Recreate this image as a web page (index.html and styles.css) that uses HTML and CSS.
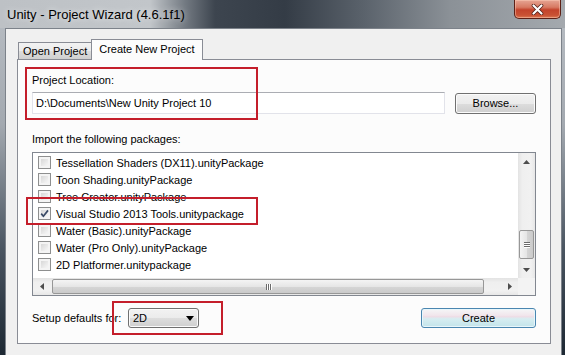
FILE: index.html
```html
<!DOCTYPE html>
<html lang="en">
<head>
	<meta charset="UTF-8">
	<title>Unity - Project Wizard</title>
	<link rel="stylesheet" href="styles.css">
</head>
<body>
	<div class="window">
		<div class="titlebar">
			<span class="title">Unity - Project Wizard (4.6.1f1)</span>
			<span class="close">
				<svg width="13" height="11" viewBox="0 0 13 11"><path d="M2.5 1.5 L10.5 9.5 M10.5 1.5 L2.5 9.5" stroke="#4a1a12" stroke-width="3.6" stroke-linecap="round"/><path d="M2.5 1.5 L10.5 9.5 M10.5 1.5 L2.5 9.5" stroke="#fff" stroke-width="2.2" stroke-linecap="round"/></svg>
			</span>
		</div>
		<div class="client">
			<div class="tabs">
				<span class="tab">Open Project</span>
				<span class="tab active">Create New Project</span>
			</div>
			<div class="panel">
				<div class="label">Project Location:</div>
				<div class="location-row">
					<div class="input">D:\Documents\New Unity Project 10</div>
					<span class="btn browse">Browse...</span>
				</div>
				<div class="label packages-label">Import the following packages:</div>
				<div class="listbox">
					<div class="items">
						<div class="item"><span class="check"></span>Tessellation Shaders (DX11).unityPackage</div>
						<div class="item"><span class="check"></span>Toon Shading.unityPackage</div>
						<div class="item"><span class="check"></span>Tree Creator.unityPackage</div>
						<div class="item"><span class="check checked"><svg width="11" height="11" viewBox="0 0 11 11"><path d="M2.2 5.6 L4.4 8.2 L9 2.4" fill="none" stroke="#3a4a66" stroke-width="1.7"/></svg></span>Visual Studio 2013 Tools.unitypackage</div>
						<div class="item"><span class="check"></span>Water (Basic).unityPackage</div>
						<div class="item"><span class="check"></span>Water (Pro Only).unityPackage</div>
						<div class="item"><span class="check"></span>2D Platformer.unitypackage</div>
					</div>
					<div class="vscroll">
						<span class="sb-btn"><svg width="7" height="4" viewBox="0 0 7 4"><polygon points="3.5,0 7,4 0,4" fill="#4d4d4d"/></svg></span>
						<span class="vthumb"><i></i><i></i><i></i></span>
						<span class="sb-track"></span>
						<span class="sb-btn"><svg width="7" height="4" viewBox="0 0 7 4"><polygon points="0,0 7,0 3.5,4" fill="#4d4d4d"/></svg></span>
					</div>
					<div class="hscroll">
						<span class="sb-btn"><svg width="4" height="7" viewBox="0 0 4 7"><polygon points="4,0 4,7 0,3.5" fill="#4d4d4d"/></svg></span>
						<span class="hthumb"><i></i><i></i><i></i></span>
						<span class="sb-track"></span>
						<span class="sb-btn"><svg width="4" height="7" viewBox="0 0 4 7"><polygon points="0,0 4,3.5 0,7" fill="#4d4d4d"/></svg></span>
					</div>
					<div class="corner"></div>
				</div>
				<div class="footer">
					<span class="setup-label">Setup defaults for:</span>
					<span class="select">2D<svg width="8" height="5" viewBox="0 0 8 5"><polygon points="0,0 8,0 4,5" fill="#000"/></svg></span>
					<span class="btn create">Create</span>
				</div>
			</div>
		</div>
	</div>
	<div class="mark mark-location"></div>
	<div class="mark mark-package"></div>
	<div class="mark mark-setup"></div>
</body>
</html>
```

FILE: styles.css
```css
*{margin:0;padding:0;box-sizing:border-box}
body{
	width: 565px;
	height: 355px;
	overflow:hidden;
	position:relative;
	font-family: "Liberation Sans", Arial, sans-serif;
	font-size: 11px;
	color:#000;
	background:linear-gradient(180deg, #b9bec4 0, #a3a9b0 35%, #4a5561 70%, #1d2833 100%);
}
.window{
	height: 355px;
	display:flex;
	flex-direction:column;
}
.titlebar{
	height: 28px;
	display:flex;
	align-items:center;
	background:linear-gradient(90deg, #bdc1c5 0, #c2c6ca 150px, #737a82 185px, #3d454f 215px, #343c46 285px, #5b636c 365px, #8b9197 450px, #a4a9ae 565px);
}
.title{
	padding-left: 7px;
	font-size: 13px;
	color:#000;
	text-shadow:0 0 6px rgba(255,255,255,.8);
}
.close{
	margin-left:auto;
	margin-right:4px;
	align-self:flex-start;
	width: 47px;
	height: 19px;
	display:flex;
	align-items:center;
	justify-content:center;
	border:1px solid #5c2016;
	border-top:none;
	border-radius:0 0 5px 5px;
	background:linear-gradient(180deg, #e6a593 0, #d77a63 40%, #c3432b 55%, #c95234 85%, #dc7a55 100%);
	box-shadow:inset 0 0 0 1px rgba(255,210,190,.45);
}
.client{
	flex:1;
	margin:0 3px 0 5px;
	border:1px solid #7c828a;
	border-bottom:none;
	background:#f0f0f0;
	padding:10px 10px 0 11px;
}
.tabs{
	height: 20px;
	display:flex;
	align-items:flex-end;
	padding-left:1px;
}
.tab{
	height: 17px;
	padding:0 4px;
	line-height: 16px;
	border:1px solid #898c95;
	border-bottom:none;
	background:linear-gradient(180deg, #f2f2f2 0, #ebebeb 50%, #dddddd 51%, #cfcfcf 100%);
}
.tab.active{
	height: 21px;
	margin-bottom:-1px;
	margin-left:-1px;
	padding:0 7px;
	line-height: 18px;
	background:#fcfcfc;
	position:relative;
	z-index:1;
}
.panel{
	border:1px solid #898c95;
	background:#fcfcfc;
	padding:13px 14px 13px 14px;
}
.label{
	line-height: 14px;
}
.location-row{
	display:flex;
	align-items:center;
	gap:10px;
	margin-top:5px;
}
.input{
	flex:1;
	height: 22px;
	line-height: 20px;
	padding-left:3px;
	background:#fff;
	border:1px solid #e2e3ea;
	border-top-color:#abadb3;
}
.btn{
	display:flex;
	align-items:center;
	justify-content:center;
	border:1px solid #707070;
	border-radius:3px;
	background:linear-gradient(180deg, #f2f2f2 0, #ebebeb 50%, #dddddd 51%, #cfcfcf 100%);
	box-shadow:inset 0 0 0 1px #fbfbfb;
}
.browse{
	width: 81px;
	height: 21px;
}
.packages-label{
	margin-top:18px;
}
.listbox{
	margin-top:6px;
	height: 144px;
	border:1px solid #828790;
	background:#fff;
	display:grid;
	grid-template-columns:1fr 17px;
	grid-template-rows:1fr 17px;
}
.items{
	padding:1px 0 0 5px;
	overflow:hidden;
}
.item{
	height: 17px;
	display:flex;
	align-items:center;
	gap:5px;
	white-space:nowrap;
}
.check{
	width: 13px;
	height: 13px;
	flex:none;
	display:flex;
	align-items:center;
	justify-content:center;
	border:1px solid #8e8f8f;
	background:linear-gradient(135deg, #cfcfcf 0, #f1f1f1 70%, #fbfbfb 100%);
	box-shadow:inset 0 0 0 2px #f4f4f4;
}
.vscroll{
	display:flex;
	flex-direction:column;
	background:linear-gradient(90deg, #e3e3e3 0, #efefef 25%, #f1f1f1 75%, #e7e7e7 100%);
}
.hscroll{
	display:flex;
	background:linear-gradient(180deg, #e3e3e3 0, #efefef 25%, #f1f1f1 75%, #e7e7e7 100%);
}
.sb-btn{
	width: 17px;
	height: 17px;
	flex:none;
	display:flex;
	align-items:center;
	justify-content:center;
}
.sb-track{
	flex:1;
}
.vthumb{
	margin:60px 1px 0;
	height: 29px;
	flex:none;
	display:flex;
	flex-direction:column;
	align-items:center;
	justify-content:center;
	gap:1px;
	border:1px solid #979797;
	border-radius:2px;
	background:linear-gradient(90deg, #f4f4f4 0, #e6e6e6 50%, #d6d6d6 51%, #cacaca 100%);
}
.vthumb i{
	width: 6px;
	height: 1px;
	background:#6b6b6b;
	box-shadow:0 1px 0 #fff;
}
.hthumb{
	margin:1px 0 1px 2px;
	width: 432px;
	flex:none;
	display:flex;
	align-items:center;
	justify-content:center;
	gap:1px;
	border:1px solid #979797;
	border-radius:2px;
	background:linear-gradient(180deg, #f4f4f4 0, #e6e6e6 50%, #d6d6d6 51%, #cacaca 100%);
}
.hthumb i{
	width: 1px;
	height: 6px;
	background:#6b6b6b;
	box-shadow:1px 0 0 #fff;
}
.corner{
	background:#f3f3f3;
}
.footer{
	margin-top:10px;
	height: 24px;
	display:flex;
	align-items:center;
}
.setup-label{
	width: 96px;
}
.select{
	width: 71px;
	height: 20px;
	display:flex;
	align-items:center;
	justify-content:space-between;
	padding:0 4px 0 4px;
	border:1px solid #707070;
	border-radius:3px;
	background:linear-gradient(180deg, #f2f2f2 0, #ebebeb 50%, #dddddd 51%, #cfcfcf 100%);
	box-shadow:inset 0 0 0 1px #fbfbfb;
}
.create{
	margin-left:auto;
	width: 115px;
	height: 20px;
	border-color:#4a86b0;
	background:linear-gradient(180deg, #f5f6f7 0, #f1e6ec 35%, #eedde6 42%, #d6edf1 55%, #c3e4ea 100%);
	box-shadow:inset 0 0 0 1px #e8f6fb;
}
.mark{
	position:absolute;
	border:2px solid #c41e2b;
}
.mark-location{
	left:25px;
	top:67px;
	width: 233px;
	height: 53px;
}
.mark-package{
	left:26px;
	top:197px;
	width: 232px;
	height: 28px;
}
.mark-setup{
	left:112px;
	top:301px;
	width: 111px;
	height: 34px;
}
```
